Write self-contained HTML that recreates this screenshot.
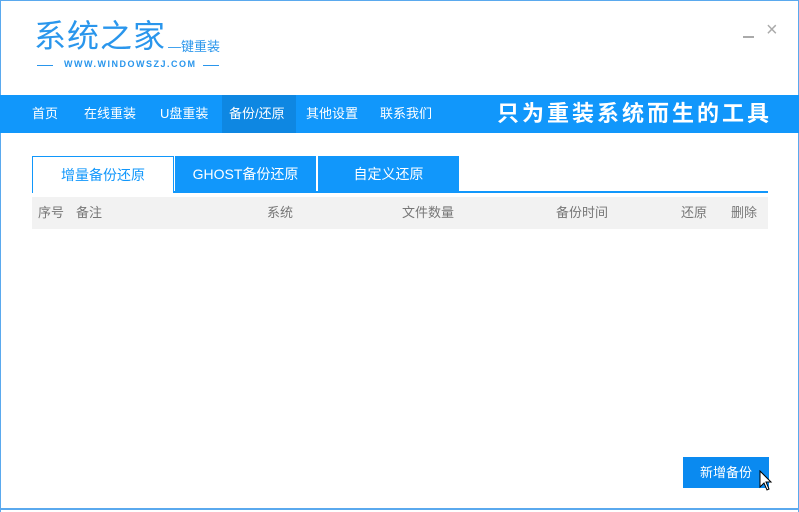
<!DOCTYPE html><html><head><meta charset="utf-8"><style>
*{margin:0;padding:0;box-sizing:border-box}
body{width:799px;height:512px;position:relative;background:#fff;font-family:"Liberation Sans","Noto Sans CJK SC",sans-serif;overflow:hidden;}
.a{position:absolute;white-space:nowrap}
.nav{position:absolute;left:0;top:95px;width:799px;height:38px;background:#1197fb}
.nav span{position:absolute;top:0;height:38px;line-height:38px;color:#fff;font-size:13px}
.tab{position:absolute;top:156px;height:36px;line-height:36px;text-align:center;font-size:14px;color:#fff;background:#1197fb}
.th{position:absolute;top:197px;left:32px;width:736px;height:32px;background:#f2f2f2}
.th span{position:absolute;top:0;line-height:32px;font-size:13px;color:#777}
</style></head><body>
<div class="a" style="left:0;top:0;width:799px;height:1px;background:#5aa9ee"></div>
<div class="a" style="left:0;top:0;width:1px;height:512px;background:#5aa9ee"></div>
<div class="a" style="left:798px;top:0;width:1px;height:512px;background:#5aa9ee"></div>
<div class="a" style="left:34px;top:16px;font-size:32px;color:#2a96ec;letter-spacing:1px;line-height:40px">系统之家</div>
<div class="a" style="left:168px;top:36px;font-size:13px;color:#2a96ec">—键重装</div>
<div class="a" style="left:37px;top:65px;width:16px;height:1px;background:#2a96ec"></div>
<div class="a" style="left:64px;top:59px;font-size:9px;color:#2a96ec;letter-spacing:1.5px;font-weight:bold">WWW.WINDOWSZJ.COM</div>
<div class="a" style="left:203px;top:65px;width:16px;height:1px;background:#2a96ec"></div>
<div class="a" style="left:743px;top:36px;width:11px;height:2px;background:#aaa"></div>
<div class="a" style="left:766px;top:17px;font-size:20px;color:#aaa;line-height:26px">×</div>
<div class="nav">
<span style="left:32px">首页</span>
<span style="left:84px">在线重装</span>
<span style="left:160px">U盘重装</span>
<span style="left:222px;width:74px;background:#0e87e2;padding-left:7px">备份/还原</span>
<span style="left:306px">其他设置</span>
<span style="left:380px">联系我们</span>
<span style="left:497px;font-size:22px;font-weight:bold;letter-spacing:3px">只为重装系统而生的工具</span>
</div>
<div class="a" style="left:173px;top:191px;width:595px;height:2px;background:#1197fb"></div>
<div class="tab" style="left:32px;width:142px;background:#fff;color:#1197fb;border:1px solid #1197fb;border-bottom:none;height:37px">增量备份还原</div>
<div class="tab" style="left:175px;width:141px">GHOST备份还原</div>
<div class="tab" style="left:318px;width:141px">自定义还原</div>
<div class="th">
<span style="left:6px">序号</span><span style="left:44px">备注</span><span style="left:235px">系统</span><span style="left:370px">文件数量</span><span style="left:524px">备份时间</span><span style="left:649px">还原</span><span style="left:699px">删除</span>
</div>
<div class="a" style="left:683px;top:457px;width:86px;height:31px;background:#0a8af0;color:#fff;font-size:13px;line-height:31px;text-align:center">新增备份</div>
<svg class="a" style="left:759px;top:470px" width="14" height="22" viewBox="0 0 14 22"><path d="M1 1 L1 17 L5 13 L8 20 L10 19 L7 12 L12 12 Z" fill="#fff" stroke="#000" stroke-width="1"/></svg>
<div class="a" style="left:0;top:508px;width:799px;height:2px;background:#5aa9ee"></div>
</body></html>
